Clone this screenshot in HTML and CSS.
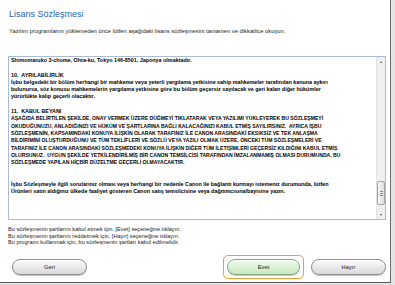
FILE: index.html
```html
<!DOCTYPE html>
<html lang="tr">
<head>
  <meta charset="UTF-8">
  <meta name="viewport" content="width=device-width, initial-scale=1.0">
  <title>Lisans Sözleşmesi</title>
  <link rel="stylesheet" href="styles.css">
</head>
<body>
  <div class="dialog">
    <h1 class="title">Lisans Sözleşmesi</h1>
    <p class="intro">Yazılım programlarını yüklemeden önce lütfen aşağıdaki lisans sözleşmesini tamamen ve dikkatlice okuyun.</p>

    <div class="license">
      <div class="license-text">
        <div>Shimomaruko 3-chome, Ohta-ku, Tokyo 146-8501, Japonya olmaktadır.</div>
        <div class="blank"></div>
        <div>10.&nbsp; AYRILABİLİRLİK</div>
        <div>İşbu belgedeki bir bölüm herhangi bir mahkeme veya yeterli yargılama yetkisine sahip mahkemeler tarafından kanuna aykırı</div>
        <div>bulunursa, söz konusu mahkemelerin yargılama yetkisine göre bu bölüm geçersiz sayılacak ve geri kalan diğer hükümler</div>
        <div>yürürlükte kalıp geçerli olacaktır.</div>
        <div class="blank"></div>
        <div>11.&nbsp; KABUL BEYANI</div>
        <div class="caps">AŞAĞIDA BELİRTİLEN ŞEKİLDE, ONAY VERMEK ÜZERE DÜĞMEYİ TIKLATARAK VEYA YAZILIMI YÜKLEYEREK BU SÖZLEŞMEYİ</div>
        <div class="caps">OKUDUĞUNUZU, ANLADIĞINIZI VE HÜKÜM VE ŞARTLARINA BAĞLI KALACAĞINIZI KABUL ETMİŞ SAYILIRSINIZ.&nbsp; AYRICA İŞBU</div>
        <div class="caps">SÖZLEŞMENİN, KAPSAMINDAKİ KONUYA İLİŞKİN OLARAK TARAFINIZ İLE CANON ARASINDAKİ EKSİKSİZ VE TEK ANLAŞMA</div>
        <div class="caps">BİLDİRİMİNİ OLUŞTURDUĞUNU VE TÜM TEKLİFLERİ VE SÖZLÜ VEYA YAZILI OLMAK ÜZERE, ÖNCEKİ TÜM SÖZLEŞMELERİ VE</div>
        <div class="caps">TARAFINIZ İLE CANON ARASINDAKİ SÖZLEŞMEDEKİ KONUYA İLİŞKİN DİĞER TÜM İLETİŞİMLERİ GEÇERSİZ KILDIĞINI KABUL ETMİŞ</div>
        <div class="caps">OLURSUNUZ.&nbsp; UYGUN ŞEKİLDE YETKİLENDİRİLMİŞ BİR CANON TEMSİLCİSİ TARAFINDAN İMZALANMAMIŞ OLMASI DURUMUNDA, BU</div>
        <div class="caps">SÖZLEŞMEDE YAPILAN HİÇBİR DÜZELTME GEÇERLİ OLMAYACAKTIR.</div>
        <div class="blank"></div>
        <div class="blank"></div>
        <div>İşbu Sözleşmeyle ilgili sorularınız olması veya herhangi bir nedenle Canon ile bağlantı kurmayı istemeniz durumunda, lütfen</div>
        <div>Ürünleri satın aldığınız ülkede faaliyet gösteren Canon satış temsilcisine veya dağıtımcısına/bayisine yazın.</div>
      </div>
      <div class="scrollbar">
        <div class="arrow up"></div>
        <div class="track"></div>
        <div class="thumb"><span></span><span></span><span></span></div>
        <div class="arrow down"></div>
      </div>
    </div>

    <div class="notes">
      <p>Bu sözleşmenin şartlarını kabul etmek için, [Evet] seçeneğine tıklayın.</p>
      <p>Bu sözleşmenin şartlarını reddetmek için, [Hayır] seçeneğine tıklayın.</p>
      <p>Bu programı kullanmak için, bu sözleşmenin şartları kabul edilmelidir.</p>
    </div>

    <div class="buttons">
      <button class="btn">Geri</button>
      <div class="right-buttons">
        <span class="focus-ring"><button class="btn btn-yes">Evet</button></span>
        <button class="btn">Hayır</button>
      </div>
    </div>
  </div>
</body>
</html>
```

FILE: styles.css
```css
body {
  margin: 0;
  background: #e4e4e4;
  font-family: 'Liberation Sans', Arial, sans-serif;
  color: #1a1a1a;
}
.dialog {
  width: 390px;
  height: 282px;
  background: #fff;
  border-right: 1px solid #6e6e6e;
  border-bottom: 1px solid #5a5a5a;
  display: flex;
  flex-direction: column;
}
.title {
  margin: 0;
  padding: 9px 0 0 9px;
  font-size: 9px;
  line-height: 11px;
  font-weight: normal;
  color: #2463b8;
}
.intro {
  margin: 8px 0 0 9px;
  font-size: 5.8px;
  line-height: 7px;
  white-space: nowrap;
}
.license {
  margin: 21px 0 0 8px;
  width: 376px;
  height: 162px;
  border: 1px solid #a9bcd3;
  display: flex;
  overflow: hidden;
}
.license-text {
  flex: 1;
  padding: 0 0 0 2px;
  font-size: 5.4px;
  line-height: 7.3px;
  font-weight: bold;
  color: #000;
  white-space: nowrap;
  overflow: hidden;
}
.license-text .caps {
  font-size: 5.1px;
}
.license-text .blank {
  height: 7.3px;
}
.scrollbar {
  width: 8px;
  background: #efefef;
  border-left: 1px solid #e2e2e2;
  display: flex;
  flex-direction: column;
  align-items: center;
}
.arrow {
  height: 9px;
  width: 8px;
  display: flex;
  align-items: center;
  justify-content: center;
}
.arrow::after {
  content: "";
  border-left: 1.5px solid transparent;
  border-right: 1.5px solid transparent;
}
.arrow.up::after {
  border-bottom: 2px solid #555;
}
.arrow.down::after {
  border-top: 2px solid #555;
}
.track {
  flex: 1;
}
.thumb {
  width: 6px;
  height: 22px;
  margin-bottom: 5px;
  border: 1px solid #a3a3a3;
  border-radius: 2px;
  background: linear-gradient(to right, #f7f7f7, #dedede);
  display: flex;
  flex-direction: column;
  align-items: center;
  justify-content: center;
  gap: 1px;
}
.thumb span {
  width: 3px;
  height: 1px;
  background: #8a8a8a;
}
.notes {
  margin: 6px 0 0 8px;
  font-size: 5.6px;
  line-height: 6.5px;
  white-space: nowrap;
}
.notes p {
  margin: 0;
}
.buttons {
  margin-top: 9px;
  padding: 0 4px 0 12px;
  display: flex;
  justify-content: space-between;
  align-items: center;
}
.right-buttons {
  display: flex;
  align-items: center;
  gap: 7px;
}
.btn {
  width: 75px;
  height: 16px;
  padding: 0;
  border: 1px solid #8e8e8e;
  border-radius: 8px;
  background: linear-gradient(to bottom, #fdfdfd, #e6e6e6 60%, #dadada);
  box-shadow: 0 1px 0 #c4c4c4, inset 0 1px 0 #fff;
  font-family: 'Liberation Sans', Arial, sans-serif;
  font-size: 5.8px;
  color: #222;
}
.focus-ring {
  display: flex;
  padding: 3px;
  border: 1.5px solid #f0a033;
  border-radius: 5px;
}
.btn-yes {
  width: 73px;
  border-color: #86a886;
  background: linear-gradient(to bottom, #f2fbef, #d8f0d0 60%, #c8e6bd);
}
```
